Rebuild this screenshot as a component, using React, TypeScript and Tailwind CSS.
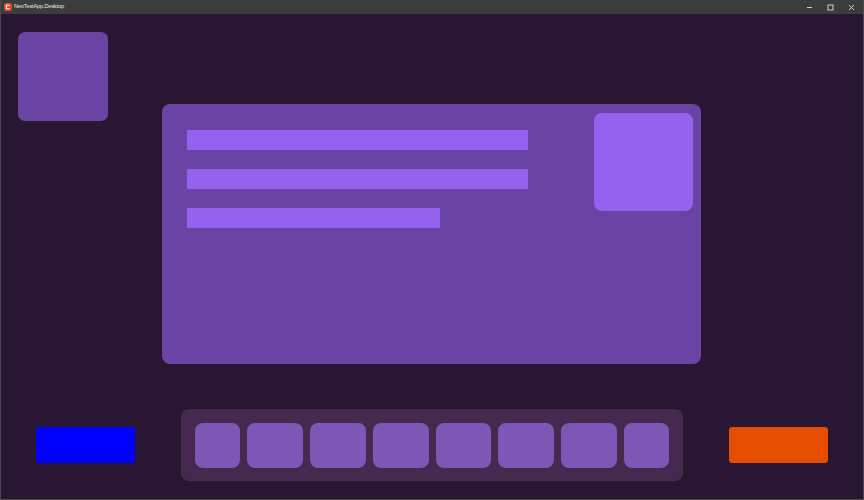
import React from "react";

export default function App() {
  const items = [45, 56, 56, 56, 56, 56, 56, 45];
  return (
    <div className="w-[864px] h-[500px] flex flex-col bg-[#281633] border-x border-b border-[#4b4b4b] overflow-hidden" style={{ fontFamily: "'Liberation Sans', Arial, sans-serif" }}>
      {/* Title bar */}
      <div className="h-[14px] shrink-0 bg-[#3c3c3c] flex items-center -mx-px">
        <div className="ml-[4px] w-[8px] h-[8px] rounded-[2px] bg-[#e4472a] flex items-center justify-center">
          <svg width="6" height="6" viewBox="0 0 6 6">
            <path d="M4.6 1.3H1.4V4.7H4.6" fill="none" stroke="#fff" strokeWidth="1.1" />
          </svg>
        </div>
        <span className="ml-[2px] text-[5.5px] leading-none text-[#ececec] tracking-[-0.1px]">NeoTestApp.Desktop</span>
        <div className="ml-auto flex items-center h-full">
          <div className="w-[21px] h-full flex items-center justify-center">
            <svg width="7" height="7" viewBox="0 0 7 7"><path d="M1 3.5H6" stroke="#cfcfcf" strokeWidth="1" /></svg>
          </div>
          <div className="w-[21px] h-full flex items-center justify-center">
            <svg width="7" height="7" viewBox="0 0 7 7"><rect x="1" y="1" width="5" height="5" fill="none" stroke="#cfcfcf" strokeWidth="1" /></svg>
          </div>
          <div className="w-[21px] h-full flex items-center justify-center mr-[2px]">
            <svg width="7" height="7" viewBox="0 0 7 7"><path d="M1 1L6 6M6 1L1 6" stroke="#cfcfcf" strokeWidth="1" /></svg>
          </div>
        </div>
      </div>

      {/* Upper area */}
      <div className="grid">
        <div className="col-start-1 row-start-1 self-start ml-[17px] mt-[18px] w-[90px] h-[89px] rounded-[7px] bg-[#6a44a4]" />
        <div className="col-start-1 row-start-1 self-start ml-[161px] mt-[90px] w-[539px] h-[260px] rounded-[8px] bg-[#6a44a4] flex">
          <div className="flex flex-col gap-[19px] pl-[25px] pt-[26px]">
            <div className="w-[341px] h-[20px] bg-[#9562ef]" />
            <div className="w-[341px] h-[20px] bg-[#9562ef]" />
            <div className="w-[253px] h-[20px] bg-[#9562ef]" />
          </div>
          <div className="ml-auto mt-[9px] mr-[8px] w-[99px] h-[98px] rounded-[8px] bg-[#9562ef]" />
        </div>
      </div>

      {/* Bottom row */}
      <div className="flex items-center mt-[45px]">
        <div className="ml-[35px] w-[99px] h-[36px] rounded-[3px] bg-[#0000ff]" />
        <div className="ml-[46px] w-[502px] h-[72px] rounded-[8px] bg-[#432a4e] flex items-center gap-[7px] px-[14px]">
          {items.map((w, i) => (
            <div key={i} className="h-[45px] rounded-[8px] bg-[#7e56b6]" style={{ width: w }} />
          ))}
        </div>
        <div className="ml-[46px] w-[99px] h-[36px] rounded-[3px] bg-[#e54d00]" />
      </div>
    </div>
  );
}
